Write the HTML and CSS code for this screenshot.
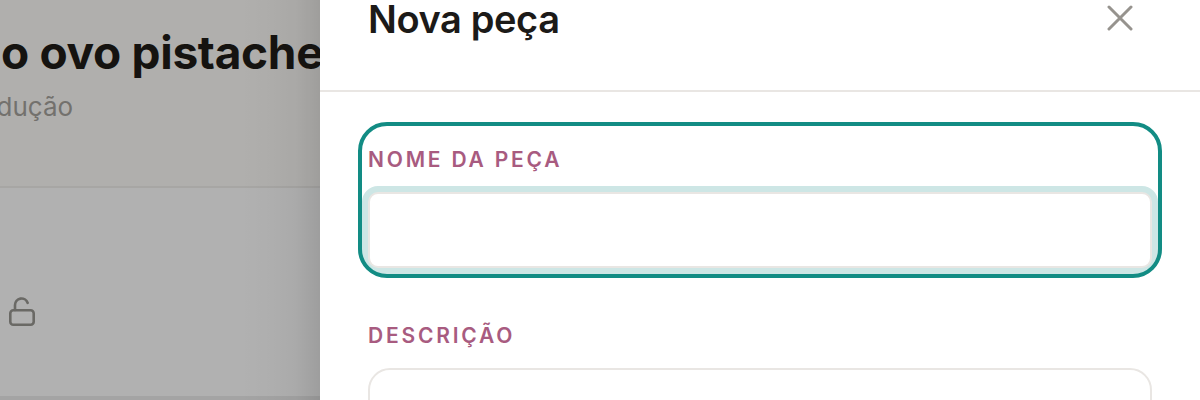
FILE: index.html
```html
<!DOCTYPE html>
<html lang="pt">
<head>
<meta charset="utf-8">
<title>Nova peça</title>
<link rel="stylesheet" href="styles.css">
</head>
<body>
<div class="app">
  <main class="page">
    <header class="page-head">
      <h1 class="page-title">o ovo pistache</h1>
      <p class="page-sub">Produção</p>
    </header>
    <section class="page-row">
      <svg class="lock" width="28" height="30" viewBox="0 0 28 30" fill="none" stroke="#6a6965" stroke-width="2.6" stroke-linecap="round" aria-hidden="true">
        <rect x="2.3" y="13.3" width="23.4" height="14.4" rx="3"/>
        <path d="M7 13V8a6.5 6.5 0 0 1 12.6-2.2"/>
      </svg>
    </section>
  </main>
  <aside class="panel">
    <header class="panel-head">
      <h2 class="panel-title">Nova peça</h2>
      <button class="close" type="button" aria-label="Fechar">
        <svg width="26" height="26" viewBox="0 0 26 26" fill="none" stroke="#96938e" stroke-width="3" stroke-linecap="round" aria-hidden="true">
          <path d="M2 2l22 22M24 2L2 24"/>
        </svg>
      </button>
    </header>
    <form class="form">
      <div class="field field-focus">
        <label class="label" for="nome">NOME DA PEÇA</label>
        <input class="input input-focus" id="nome" type="text">
      </div>
      <div class="field">
        <label class="label" for="desc">DESCRIÇÃO</label>
        <textarea class="input input-area" id="desc"></textarea>
      </div>
    </form>
  </aside>
</div>
</body>
</html>
```
FILE: styles.css
```css
* { box-sizing: border-box; }
html, body { margin: 0; height: 100%; overflow: hidden; background: #fff; }
.app { display: flex; width: 1200px; height: 400px; overflow: hidden; font-family: Inter, "Liberation Sans", sans-serif; }
.page { width: 320px; flex: none; background: #b1b1b1; overflow: hidden; display: flex; flex-direction: column; background-image: linear-gradient(to right, rgba(0,0,0,0) 240px, rgba(0,0,0,.015) 270px, rgba(0,0,0,.04) 295px, rgba(0,0,0,.11) 320px); }
.page-head { height: 188px; flex: none; padding: 27px 0 0 1px; border-bottom: 2px solid rgba(0,0,0,.05); background: rgba(170,160,150,.14); white-space: nowrap; }
.page-title { margin: 0; font-size: 46px; line-height: 50px; font-weight: 700; color: #151310; letter-spacing: -.3px; }
.page-sub { margin: 13px 0 0 -46px; font-size: 26px; line-height: 34px; color: #73716d; }
.page-row { flex: 1; padding: 109px 0 0 8px; border-bottom: 4px solid rgba(0,0,0,.07); }
.lock { display: block; }
.panel { flex: 1; background: #fff; display: flex; flex-direction: column; }
.panel-head { height: 92px; flex: none; display: flex; justify-content: space-between; align-items: flex-start; padding: 0 48px; border-bottom: 2px solid #e9e6e3; }
.panel-title { margin: 0; font-size: 38px; line-height: 38px; font-weight: 600; color: #1c1a18; letter-spacing: -.4px; }
.close { border: 0; background: none; padding: 0; margin: 5px 19px 0 0; display: block; width: 26px; height: 26px; }
.form { display: flex; flex-direction: column; gap: 28px; padding: 34px 48px 0; }
.field { padding-top: 20px; }
.field-focus { margin: 0 -6px; padding: 20px 6px 6px; border-radius: 25px; outline: 4px solid #128c84; }
.label { display: block; height: 28px; margin-bottom: 18px; font-size: 21px; line-height: 28px; font-weight: 600; letter-spacing: 2.8px; color: #a85b80; }
.input { display: block; width: 100%; border: 2px solid #e9e6e3; border-radius: 10px; background: #fff; outline: 0; padding: 0; margin: 0; }
.input-focus { height: 76px; box-shadow: 0 0 0 6px #cde6e5; }
.input-area { height: 120px; border-radius: 22px; resize: none; }
```
